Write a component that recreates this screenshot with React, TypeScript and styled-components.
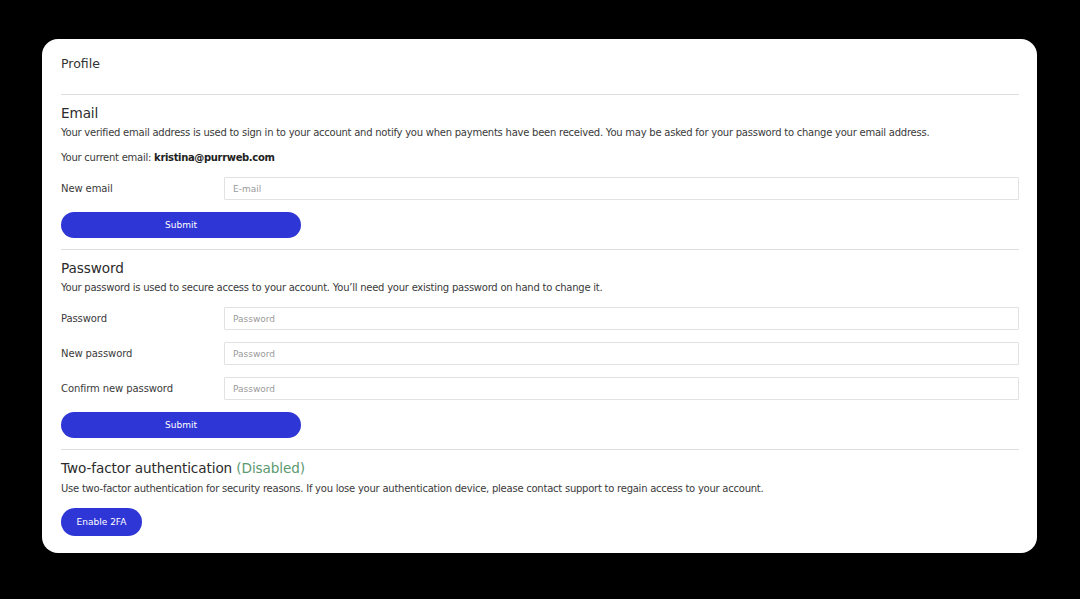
import styled, { createGlobalStyle } from 'styled-components';

const GlobalStyle = createGlobalStyle`
  html, body {
    margin: 0;
    padding: 0;
    background: #000;
  }
  body {
    font-family: 'DejaVu Sans', 'Liberation Sans', sans-serif;
    color: #2b2b2b;
  }
  * {
    box-sizing: border-box;
  }
`;

const Page = styled.div`
  padding: 39px 43px 47px 42px;
  min-height: 599px;
  background: #000;
`;

const Card = styled.div`
  background: #fff;
  border-radius: 16px;
  padding: 0 18px 17px 19px;
`;

const Header = styled.div`
  padding: 17px 0 23px;
  font-size: 12.5px;
  line-height: 15px;
  color: #333;
  border-bottom: 1px solid #dedede;
`;

const Section = styled.section<{ last?: boolean }>`
  padding: 9px 0 ${({ last }) => (last ? '0' : '11px')};
  border-bottom: ${({ last }) => (last ? 'none' : '1px solid #dedede')};
`;

const Title = styled.h2`
  margin: 0;
  font-size: 13.6px;
  line-height: 18px;
  font-weight: 400;
  letter-spacing: -0.1px;
  color: #2b2b2b;
`;

const Status = styled.span`
  color: #5c9a70;
`;

const Text = styled.p<{ gap?: number }>`
  margin: ${({ gap }) => gap ?? 4}px 0 0;
  font-size: 10px;
  line-height: 14px;
  color: #3a3a3a;
  letter-spacing: -0.24px;
`;

const Strong = styled.strong`
  font-weight: 700;
  color: #222;
  letter-spacing: -0.35px;
`;

const Fields = styled.div`
  display: flex;
  flex-direction: column;
  gap: 12px;
  margin-top: 12px;
`;

const Row = styled.label`
  display: grid;
  grid-template-columns: 163px 1fr;
  align-items: center;
`;

const Label = styled.span`
  font-size: 10px;
  color: #3a3a3a;
  letter-spacing: -0.1px;
`;

const Input = styled.input`
  height: 23px;
  border: 1px solid #e2e2e2;
  border-radius: 1px;
  padding: 0 8px;
  font-family: inherit;
  font-size: 9px;
  color: #333;
  outline: none;
  &::placeholder {
    color: #9a9a9a;
  }
`;

const Button = styled.button<{ wide?: boolean }>`
  display: block;
  margin-top: 12px;
  width: ${({ wide }) => (wide ? '240px' : '81px')};
  height: ${({ wide }) => (wide ? '26px' : '28px')};
  border: none;
  border-radius: 14px;
  background: #2f36d6;
  color: #fff;
  font-family: inherit;
  font-size: 9px;
  font-weight: 500;
  cursor: pointer;
`;

export default function App() {
  return (
    <>
      <GlobalStyle />
      <Page>
        <Card>
          <Header>Profile</Header>

          <Section>
            <Title>Email</Title>
            <Text>
              Your verified email address is used to sign in to your account and notify you when payments have been
              received. You may be asked for your password to change your email address.
            </Text>
            <Text gap={11}>
              Your current email: <Strong>kristina@purrweb.com</Strong>
            </Text>
            <Fields>
              <Row>
                <Label>New email</Label>
                <Input placeholder="E-mail" />
              </Row>
            </Fields>
            <Button wide>Submit</Button>
          </Section>

          <Section>
            <Title>Password</Title>
            <Text>
              Your password is used to secure access to your account. You’ll need your existing password on hand to
              change it.
            </Text>
            <Fields>
              <Row>
                <Label>Password</Label>
                <Input type="password" placeholder="Password" />
              </Row>
              <Row>
                <Label>New password</Label>
                <Input type="password" placeholder="Password" />
              </Row>
              <Row>
                <Label>Confirm new password</Label>
                <Input type="password" placeholder="Password" />
              </Row>
            </Fields>
            <Button wide>Submit</Button>
          </Section>

          <Section last>
            <Title>
              Two-factor authentication <Status>(Disabled)</Status>
            </Title>
            <Text gap={5}>
              Use two-factor authentication for security reasons. If you lose your authentication device, please
              contact support to regain access to your account.
            </Text>
            <Button>Enable 2FA</Button>
          </Section>
        </Card>
      </Page>
    </>
  );
}
